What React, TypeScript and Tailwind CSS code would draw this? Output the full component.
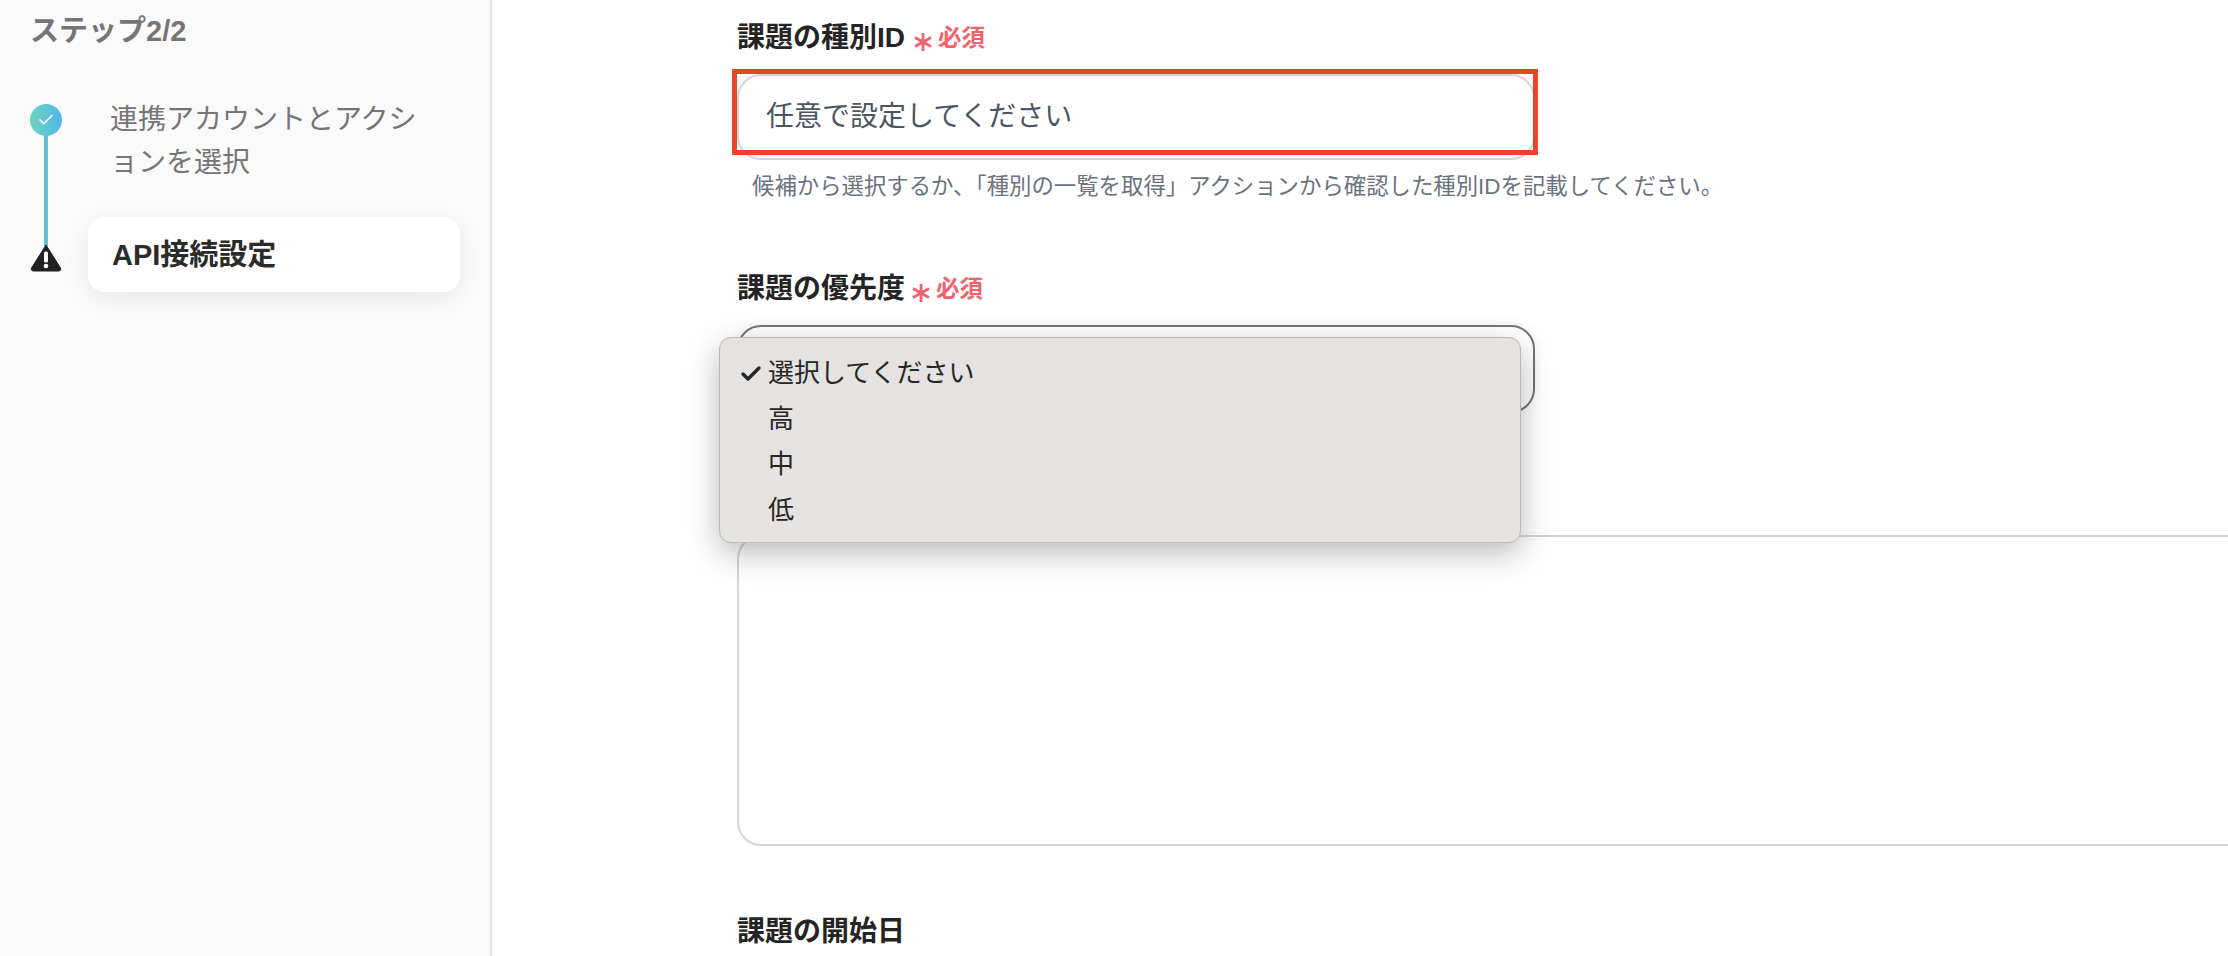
import { Check } from 'lucide-react';

const font = "font-['Liberation_Sans','Noto_Sans_CJK_JP',sans-serif]";

function Required({ className }: { className: string }) {
  return (
    <span className={`flex items-center text-[#f0626c] font-bold ${className}`}>
      <svg width="18" height="18" viewBox="0 0 18 18" className="mt-[8px] mr-[6px]">
        <path d="M9 0v18M1 4.5l16 9M17 4.5L1 13.5" stroke="#f0626c" strokeWidth="2.8" fill="none" />
      </svg>
      <span className="text-[23.5px] leading-none mt-[2px]">必須</span>
    </span>
  );
}

function Sidebar() {
  return (
    <aside className="w-[492px] shrink-0 h-full bg-[#fafafa] border-r-2 border-[#e5e5e5] pl-[30px] pt-[13px] pr-[30px]">
      <p className="text-[29px] leading-[36px] font-bold text-[#757575]">ステップ2/2</p>
      <div className="flex mt-[55px]">
        {/* step rail */}
        <div className="w-[32px] shrink-0 flex flex-col items-center">
          <div className="w-[32px] h-[32px] rounded-full bg-gradient-to-r from-[#6fd3bd] to-[#52b6e8] flex items-center justify-center">
            <Check className="w-[18px] h-[18px] text-white" strokeWidth={2.2} />
          </div>
          <div className="w-[4px] h-[110px] bg-[#5fc4cf]" />
          <svg width="32" height="28" viewBox="0 0 32 28" className="-mt-[2px]">
            <path d="M16 1 L30.5 24 Q31.5 27 28 27 H4 Q0.5 27 1.5 24 Z" fill="#212121" stroke="#212121" strokeLinejoin="round" />
            <rect x="14" y="7.5" width="4" height="11" rx="1.6" fill="#fff" />
            <circle cx="16" cy="22" r="2.3" fill="#fff" />
          </svg>
        </div>
        <div className="flex-1 ml-[26px]">
          <p className="pl-[22px] pr-[28px] text-[28px] leading-[43px] text-[#757575] -mt-[6px] [line-break:anywhere]">
            連携アカウントとアクションを選択
          </p>
          <div className="mt-[33px] h-[75px] rounded-[16px] bg-white shadow-[0_6px_28px_rgba(0,0,0,0.08)] flex items-center pl-[24px]">
            <span className="text-[29px] font-bold text-[#2b2b2b] mt-[2px]">API接続設定</span>
          </div>
        </div>
      </div>
    </aside>
  );
}

export default function App() {
  return (
    <div className={`w-[2228px] h-[956px] overflow-hidden flex bg-white ${font}`}>
      <Sidebar />
      <main className="flex-1 min-w-0 pl-[245px] relative">
        {/* field: 種別ID */}
        <div className="flex items-center h-[38px] mt-[19px]">
          <span className="text-[28px] font-bold text-[#242424] leading-none">課題の種別ID</span>
          <Required className="ml-[9px]" />
        </div>
        <div className="mt-[17px] w-[798px] h-[86px] rounded-[24px] border-2 border-[#d1d5db] flex items-center pl-[27px] relative">
          <span className="text-[28px] text-[#4b5563] -mt-[1px]">任意で設定してください</span>
          {/* annotation box */}
          <div className="absolute -left-[7px] -top-[7px] w-[806px] h-[86px] border-[5px] border-[#e94428]" />
        </div>
        <p className="mt-[12px] pl-[15px] text-[22.4px] leading-[30px] text-[#6b7280]">
          候補から選択するか、「種別の一覧を取得」アクションから確認した種別IDを記載してください。
        </p>

        {/* field: 優先度 */}
        <div className="flex items-center h-[38px] mt-[68px]">
          <span className="text-[28px] font-bold text-[#242424] leading-none">課題の優先度</span>
          <Required className="ml-[7px]" />
        </div>
        <div className="mt-[17px] w-[798px] h-[88px] rounded-[24px] border-2 border-[#757575] shadow-[0_0_12px_rgba(0,0,0,0.05)] relative">
          {/* native-looking menu */}
          <div className="absolute -left-[20px] top-[10px] w-[802px] h-[206px] z-10 rounded-[12px] bg-[#e4e3e2] border border-[#b9b9b9] shadow-[0_10px_32px_rgba(0,0,0,0.28)] pt-[13px] text-[26px] leading-[45.5px] text-[#262626]">
            <div className="flex items-center">
              <Check className="w-[24px] h-[24px] ml-[19px] mr-[5px] text-[#262626]" strokeWidth={3.4} />
              <span>選択してください</span>
            </div>
            <div className="pl-[48px]">高</div>
            <div className="pl-[48px]">中</div>
            <div className="pl-[48px]">低</div>
          </div>
        </div>

        {/* field: 説明 */}
        <div className="mt-[122px] h-[311px] w-[1600px] rounded-[24px] border-2 border-[#d1d5db]" />

        {/* field: 開始日 */}
        <div className="flex items-center h-[38px] mt-[67px]">
          <span className="text-[28px] font-bold text-[#242424] leading-none">課題の開始日</span>
        </div>
      </main>
    </div>
  );
}
